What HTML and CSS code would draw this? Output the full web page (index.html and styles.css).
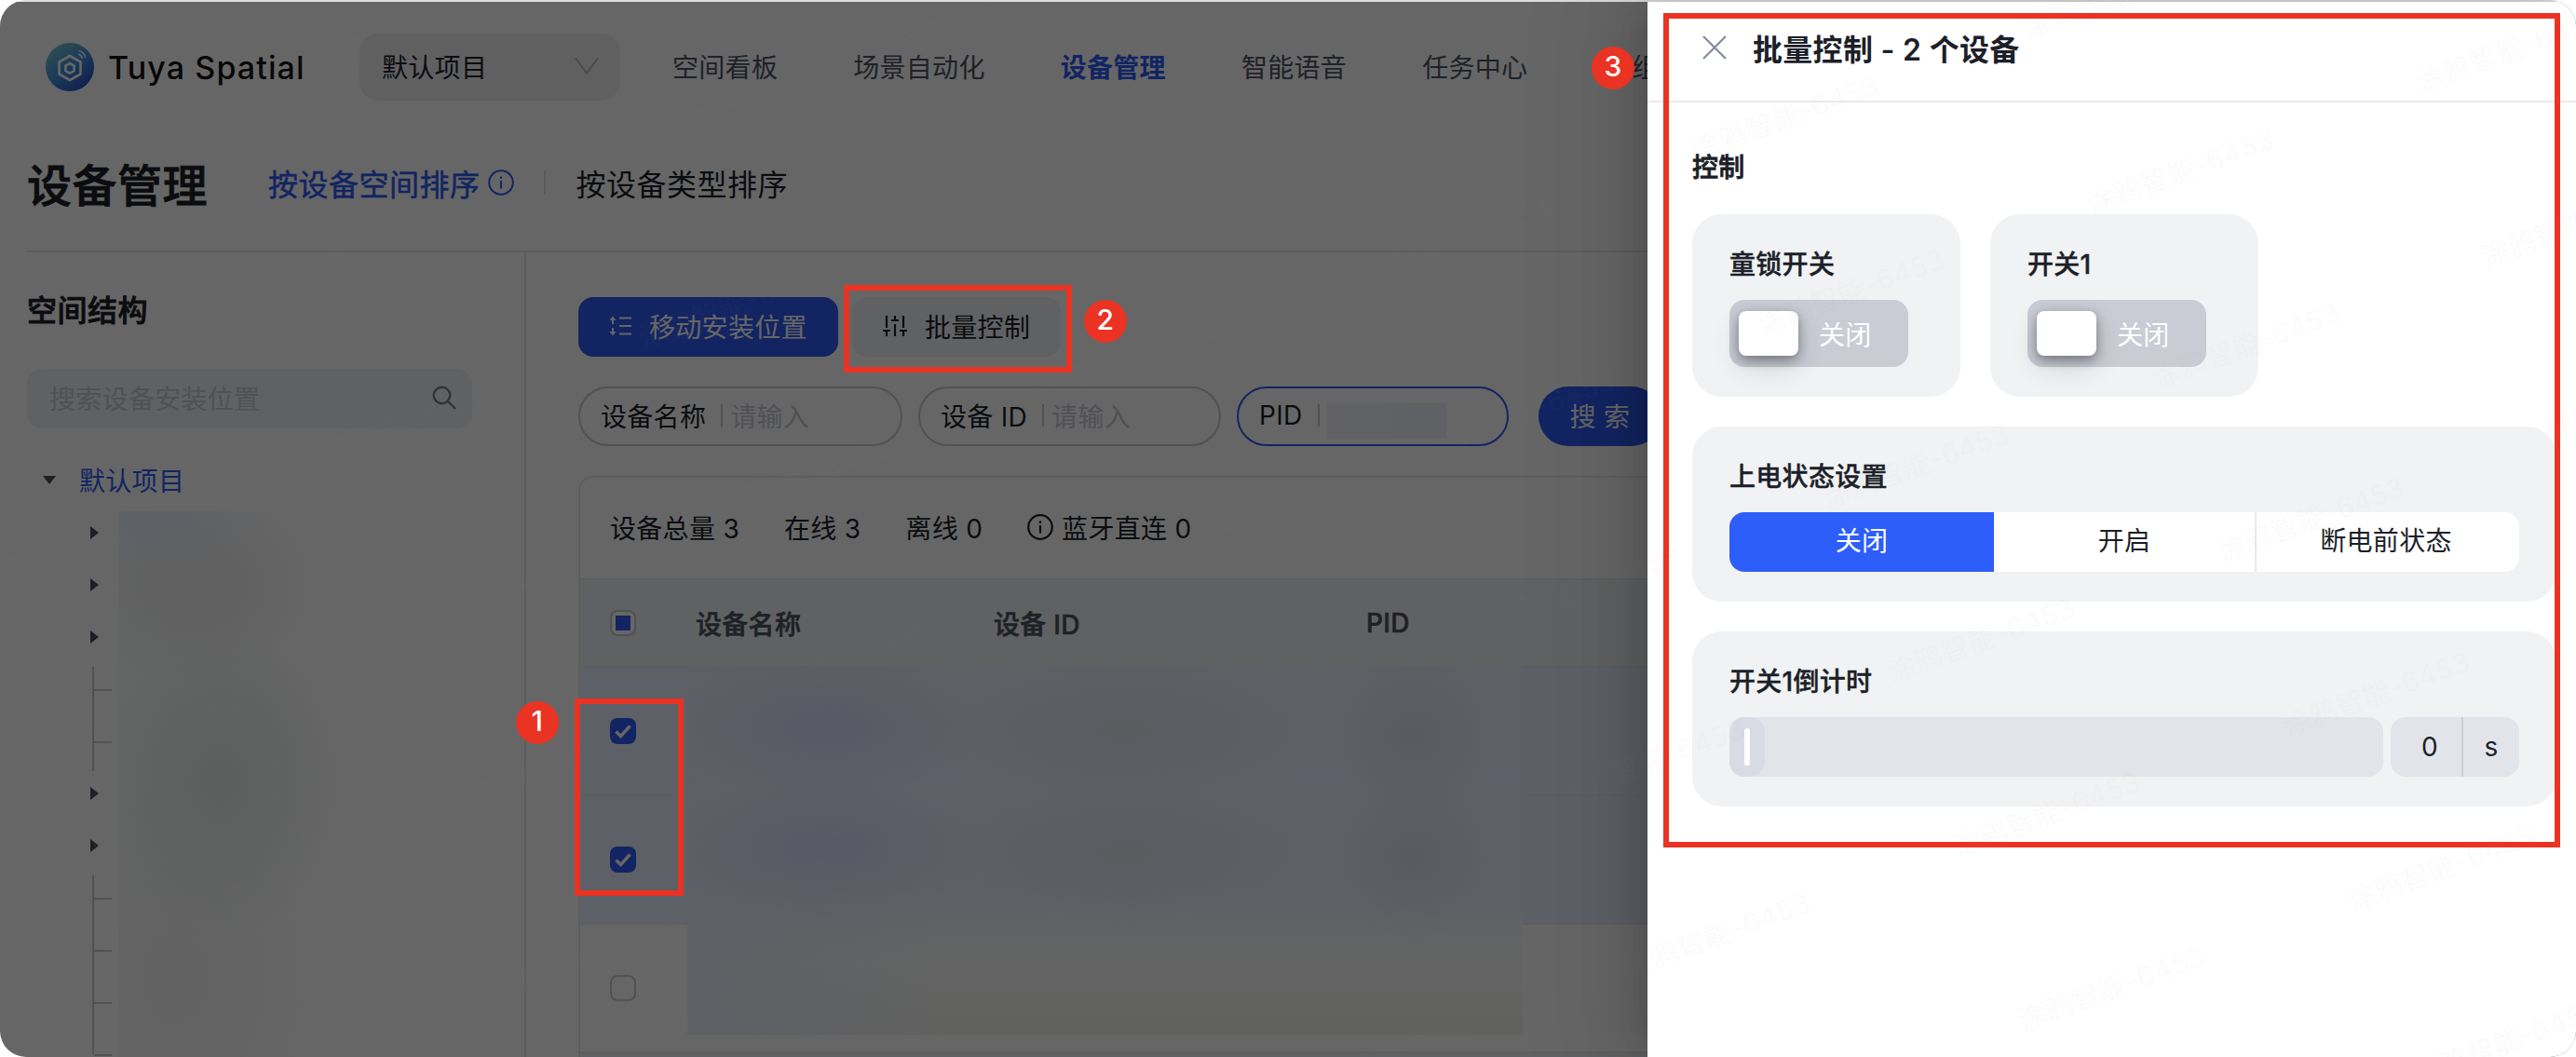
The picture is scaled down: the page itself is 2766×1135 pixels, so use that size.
FILE: index.html
```html
<!DOCTYPE html>
<html lang="zh-CN">
<head>
    <meta charset="UTF-8">
    <meta name="viewport" content="width=device-width, initial-scale=1.0">
    <title>设备管理</title>
    <link rel="stylesheet" href="styles.css">
</head>
<body>
    <div class="app">
        <header class="header">
            <div class="logo">
                <svg width="52" height="52" viewBox="0 0 52 52" fill="none">
                    <defs>
                        <linearGradient id="logoBg" x1="8" y1="6" x2="40" y2="48" gradientUnits="userSpaceOnUse">
                            <stop offset="0" stop-color="#6fc0cf"/>
                            <stop offset="0.5" stop-color="#4390dd"/>
                            <stop offset="1" stop-color="#2c55c8"/>
                        </linearGradient>
                    </defs>
                    <circle cx="26" cy="26" r="26" fill="url(#logoBg)"/>
                    <path d="M26 14l11.5 6.5v13L26 40l-11.5-6.5v-13z" stroke="#fff" stroke-width="2.6" stroke-linejoin="round"/>
                    <path d="M26 22l4.6 2.6v5.4L26 32.600l-4.600-2.600v-5.400z" stroke="#fff" stroke-width="2.600" stroke-linejoin="round"/>
                    <path d="M35 12.500a4.500 4.500 0 0 1 4 4.500M35.500 8.500a8 8 0 0 1 7 7.500" stroke="#fff" stroke-width="1.600"/>
                </svg>
                <span>Tuya Spatial</span>
            </div>
            <div class="project-select">
                <span>默认项目</span>
                <svg width="26" height="20" viewBox="0 0 26 20" fill="none" stroke="#b4b8c4" stroke-width="2"><path d="M1 1.500l12 16 12-16"/></svg>
            </div>
            <nav class="nav">
                <a>空间看板</a>
                <a>场景自动化</a>
                <a class="active">设备管理</a>
                <a>智能语音</a>
                <a>任务中心</a>
                <a class="nav-last">组</a>
            </nav>
        </header>

        <div class="title-row">
            <h1>设备管理</h1>
            <a class="sort active">按设备空间排序
                <svg width="28" height="28" viewBox="0 0 28 28" fill="none" stroke="currentColor" stroke-width="2"><circle cx="14" cy="14" r="12.800"/><path d="M14 12v8.500M14 7.500v2.400"/></svg>
            </a>
            <i class="sort-divider"></i>
            <a class="sort">按设备类型排序</a>
        </div>

        <div class="body">
            <aside class="sidebar">
                <h2>空间结构</h2>
                <div class="tree-search">
                    <span>搜索设备安装位置</span>
                    <svg width="26" height="26" viewBox="0 0 26 26" fill="none" stroke="#7b808e" stroke-width="2.400"><circle cx="10.500" cy="10.500" r="8.800"/><path d="M16.800 16.800L25 25"/></svg>
                </div>
                <div class="tree-root"><i class="caret-down"></i><span>默认项目</span></div>
                <div class="tree-row"><i class="caret"></i></div>
                <div class="tree-row"><i class="caret"></i></div>
                <div class="tree-row"><i class="caret"></i></div>
                <div class="branches">
                    <div class="branch"></div>
                    <div class="branch"></div>
                </div>
                <div class="tree-row"><i class="caret"></i></div>
                <div class="tree-row"><i class="caret"></i></div>
                <div class="branches">
                    <div class="branch"></div>
                    <div class="branch"></div>
                    <div class="branch"></div>
                    <div class="branch last"></div>
                </div>
            </aside>

            <main class="content">
                <div class="toolbar">
                    <button class="btn btn-primary">
                        <svg width="24" height="22" viewBox="0 0 24 22" fill="none" stroke="currentColor" stroke-width="2"><path d="M4 4v5M4 13v5M11 2.500h13M11 11h13M11 19.500h13"/><path d="M4 .5L7.500 5h-7zM4 21.500L7.500 17h-7z" fill="currentColor" stroke="none"/></svg>
                        移动安装位置
                    </button>
                    <button class="btn btn-default">
                        <svg width="26" height="24" viewBox="0 0 26 24" fill="none" stroke="currentColor" stroke-width="2.200"><path d="M4 1v13M4 18v5M0 17h8M13 1v4M13 10v13M9 6h8M22 1v13M22 18v5M18 17h8"/></svg>
                        批量控制
                    </button>
                </div>

                <div class="filters">
                    <div class="filter filter-name"><span>设备名称</span><i></i><em>请输入</em></div>
                    <div class="filter filter-id"><span>设备 ID</span><i></i><em>请输入</em></div>
                    <div class="filter filter-pid"><span>PID</span><i></i><b class="pid-value"></b></div>
                    <button class="btn-search">搜 索</button>
                </div>

                <div class="table">
                    <div class="stats">
                        <span>设备总量 3</span>
                        <span>在线 3</span>
                        <span>离线 0</span>
                        <span class="stat-ble">
                            <svg width="28" height="28" viewBox="0 0 28 28" fill="none" stroke="currentColor" stroke-width="2.200"><circle cx="14" cy="14" r="12.800"/><path d="M14 12v8.500M14 7.500v2.400"/></svg>
                            蓝牙直连 0
                        </span>
                    </div>
                    <div class="row head">
                        <i class="checkbox partial"></i>
                        <span>设备名称</span>
                        <span>设备 ID</span>
                        <span>PID</span>
                    </div>
                    <div class="row selected">
                        <i class="checkbox checked"><svg width="28" height="28" viewBox="0 0 28 28" fill="none" stroke="#fff" stroke-width="3.400"><path d="M6.500 14.500l5 5 10-11"/></svg></i>
                    </div>
                    <div class="row selected">
                        <i class="checkbox checked"><svg width="28" height="28" viewBox="0 0 28 28" fill="none" stroke="#fff" stroke-width="3.400"><path d="M6.500 14.500l5 5 10-11"/></svg></i>
                    </div>
                    <div class="row">
                        <i class="checkbox"></i>
                    </div>
                    <div class="row foot"></div>
                </div>
            </main>
        </div>

        <div class="mask"></div>

        <section class="drawer">
            <div class="drawer-header">
                <svg width="26" height="26" viewBox="0 0 26 26" fill="none" stroke="#858b9c" stroke-width="2.200"><path d="M1 1l24 24M25 1L1 25"/></svg>
                <span>批量控制 - 2 个设备</span>
            </div>
            <div class="drawer-body">
                <h3>控制</h3>
                <div class="switches">
                    <div class="card">
                        <label>童锁开关</label>
                        <div class="switch"><i></i>关闭</div>
                    </div>
                    <div class="card">
                        <label>开关1</label>
                        <div class="switch"><i></i>关闭</div>
                    </div>
                </div>
                <div class="card">
                    <label>上电状态设置</label>
                    <div class="segment">
                        <span class="on">关闭</span>
                        <span>开启</span>
                        <span>断电前状态</span>
                    </div>
                </div>
                <div class="card">
                    <label>开关1倒计时</label>
                    <div class="countdown">
                        <div class="slider"><div class="handle"><i></i></div></div>
                        <div class="number"><span>0</span><span>s</span></div>
                    </div>
                </div>
            </div>
        </section>

        <div class="watermark" id="watermark"></div>

        <!-- blurred private data -->
        <div class="blur blur-tree"></div>
        <div class="blur blur-table"></div>

        <!-- step marks -->
        <div class="frame frame-1"></div>
        <div class="frame frame-2"></div>
        <div class="frame frame-3"></div>
        <div class="step step-1">1</div>
        <div class="step step-2">2</div>
        <div class="step step-3">3</div>
    </div>

    <script>
        // Tile the watermark over the whole page
        const layer = document.getElementById('watermark');
        for (let i = -3; i < 9; i++) {
            for (let j = -4; j < 9; j++) {
                const x = 193 + i * 423.7 + j * 70;
                const y = 100 + i * 57.3 + j * 187;
                if (x < -200 || x > 2760 || y < -20 || y > 1200) continue;
                const mark = document.createElement('span');
                mark.textContent = '涂鸦智能-6453';
                mark.style.left = x + 'px';
                mark.style.top = y + 'px';
                layer.appendChild(mark);
            }
        }
    </script>
</body>
</html>
```

FILE: styles.css
```css
* {
    box-sizing: border-box;
}

body {
    margin: 0;
    background: #fff;
    font-family: Inter, "Noto Sans CJK SC", sans-serif;
    font-size: 28px;
    letter-spacing: 0.3px;
    color: #1c1f28;
}

h1, h2, h3 {
    margin: 0;
    font-weight: 500;
}

h1, h2 {
    -webkit-text-stroke: 0.8px currentColor;
}

i, em {
    font-style: normal;
}

svg {
    display: block;
    flex: none;
}

button {
    border: none;
    font: inherit;
    letter-spacing: inherit;
    padding: 0;
}

.app {
    position: relative;
    width: 2766px;
    height: 1135px;
    overflow: hidden;
    border-radius: 28px;
    background: #fff;
    white-space: nowrap;
}

/* header */
.header {
    display: flex;
    align-items: center;
    height: 144px;
    padding-left: 49px;
}

.logo {
    display: flex;
    align-items: center;
    gap: 15px;
    width: 337px;
    font-family: Inter, sans-serif;
    font-size: 34px;
    font-weight: 500;
    letter-spacing: 1.1px;
    color: #111;
}

.project-select {
    display: flex;
    align-items: center;
    justify-content: space-between;
    width: 280px;
    height: 72px;
    padding: 0 23px 2px 24px;
    border-radius: 20px;
    background: #f0f1f3;
}

.nav {
    display: flex;
    gap: 81px;
    margin-left: 56px;
    padding-bottom: 2px;
    color: #4f5463;
}

.nav .active {
    color: #2d5bf5;
    font-weight: 700;
}

.nav .nav-last {
    padding-left: 31px;
}

/* title */
.title-row {
    display: flex;
    align-items: center;
    height: 127px;
    margin-left: 29px;
    padding-bottom: 21px;
    border-bottom: 2px solid #ebecee;
    font-size: 32px;
    letter-spacing: 0.5px;
}

.title-row h1 {
    width: 259px;
    font-size: 48px;
}

.sort {
    display: flex;
    align-items: center;
    gap: 8px;
}

.sort.active {
    color: #2d5bf5;
    -webkit-text-stroke: 0.5px currentColor;
}

.sort-divider {
    width: 2px;
    height: 26px;
    margin: 0 33px 0 32px;
    background: #dfe0e6;
}

.body {
    display: flex;
    height: 864px;
}

/* sidebar */
.sidebar {
    width: 565px;
    border-right: 2px solid #ebecee;
    padding-top: 39px;
}

.sidebar h2 {
    margin-left: 29px;
    font-size: 32px;
    line-height: 48px;
    letter-spacing: 0.5px;
}

.tree-search {
    display: flex;
    align-items: center;
    justify-content: space-between;
    width: 478px;
    height: 64px;
    margin: 38px 0 0 29px;
    padding: 0 17px 2px 24px;
    border-radius: 16px;
    background: #f1f2f4;
    color: #c8cad3;
}

.tree-root {
    display: flex;
    align-items: center;
    height: 56px;
    margin-top: 27px;
    margin-bottom: 1px;
    padding-left: 46px;
    color: #2d5bf5;
}

.caret-down {
    width: 14px;
    margin-right: 25px;
    border: 7px solid transparent;
    border-top: 9px solid #4c4f5c;
    border-bottom: 0;
}

.tree-row {
    display: flex;
    align-items: center;
    height: 56px;
    padding-left: 97px;
}

.caret {
    border: 7px solid transparent;
    border-left: 9px solid #4c4f5c;
    border-right: 0;
}

.branches {
    margin: 4px 0 -4px 99px;
}

.branch {
    width: 21px;
    height: 56px;
    border-left: 2px solid #c8cad3;
}

.branch::after {
    content: "";
    display: block;
    height: 24px;
    border-bottom: 2px solid #c8cad3;
}

.branch.last {
    height: 24px;
}

/* content */
.content {
    flex: 1;
    padding: 48px 0 0 56px;
}

.toolbar {
    display: flex;
    gap: 15px;
}

.btn {
    display: flex;
    align-items: center;
    gap: 19px;
    height: 64px;
    padding-bottom: 2px;
    border-radius: 16px;
}

.btn-primary {
    width: 279px;
    padding-left: 33px;
    background: #2d5bf5;
    color: #fff;
}

.btn-default {
    width: 224px;
    padding-left: 33px;
    background: #f1f2f4;
    color: #1c1f28;
}

.filters {
    display: flex;
    margin-top: 32px;
}

.filter {
    display: flex;
    align-items: center;
    height: 64px;
    margin-right: 17px;
    padding: 0 0 2px 22px;
    border: 2px solid #c8cad3;
    border-radius: 32px;
}

.filter i {
    width: 2px;
    height: 24px;
    margin: 0 8px 0 16px;
    background: #c8cad3;
}

.filter em {
    color: #c8cad3;
}

.filter-name {
    width: 348px;
}

.filter-id {
    width: 325px;
}

.filter-pid {
    width: 292px;
    margin-right: 32px;
    border-color: #2d5bf5;
}

.pid-value {
    width: 128px;
    height: 38px;
    margin-top: 12px;
    background: linear-gradient(90deg, #f4f6fb, #f0f2fa);
}

.btn-search {
    width: 132px;
    height: 64px;
    padding-bottom: 2px;
    border-radius: 32px;
    background: #2d5bf5;
    color: #fff;
}

.table {
    margin-top: 32px;
    border: 2px solid #ebecee;
    border-right: 0;
    border-radius: 16px 0 0 0;
    height: 640px;
}

.stats {
    display: flex;
    align-items: center;
    gap: 48px;
    height: 110px;
    padding: 0 0 2px 32px;
    border-bottom: 2px solid #e9eaec;
}

.stat-ble {
    display: flex;
    align-items: center;
    gap: 9px;
}

.row {
    display: grid;
    grid-template-columns: 92px 320px 400px 200px;
    align-items: center;
    height: 138px;
    padding-left: 32px;
    border-bottom: 2px solid #e9eaec;
}

.row.head {
    height: 94px;
    padding-bottom: 1px;
    background: #f1f2f4;
    color: #4f5463;
    font-weight: 500;
    -webkit-text-stroke: 0.6px currentColor;
}

.row.selected {
    background: #e9f0ff;
}

.row.foot {
    background: #f1f2f4;
}

.checkbox {
    display: grid;
    place-items: center;
    width: 28px;
    height: 28px;
    border: 2px solid #c8cad3;
    border-radius: 8px;
    background: #fff;
}

.checkbox.partial::before {
    content: "";
    width: 16px;
    height: 16px;
    background: #2d5bf5;
}

.checkbox.checked {
    border: none;
    background: #2d5bf5;
}

.mask {
    position: absolute;
    inset: 0;
    border-top: 2px solid #dcdcdc;
    background: rgba(0, 0, 0, 0.6);
    background-clip: padding-box;
}

/* drawer */
.drawer {
    position: absolute;
    top: 2px;
    right: 0;
    width: 997px;
    height: 1133px;
    background: #fff;
    box-shadow: -12px 0 32px -16px rgba(0, 0, 0, 0.16), -18px 0 56px rgba(0, 0, 0, 0.1), -24px 0 96px 32px rgba(0, 0, 0, 0.06);
}

.drawer-header {
    display: flex;
    align-items: center;
    gap: 28px;
    height: 108px;
    padding: 0 0 8px 59px;
    border-bottom: 2px solid #ebebed;
    font-size: 32px;
    font-weight: 600;
}

.drawer-body {
    display: flex;
    flex-direction: column;
    gap: 28px;
    width: 976px;
    padding: 48px 0 0 48px;
}

.drawer-body h3 {
    font-size: 28px;
    line-height: 44px;
    -webkit-text-stroke: 0.8px currentColor;
}

.switches {
    display: flex;
    gap: 32px;
    margin-bottom: 4px;
}

.switches .card {
    width: 288px;
}

.card {
    padding: 32px 40px;
    border-radius: 32px;
    background: #f1f2f4;
}

.card + .card {
    margin-top: 4px;
}

.card label {
    display: block;
    margin-bottom: 16px;
    line-height: 44px;
    font-weight: 500;
    -webkit-text-stroke: 0.4px currentColor;
}

.switches .card + .card {
    margin-top: 0;
}

.switch {
    display: flex;
    align-items: center;
    width: 192px;
    height: 72px;
    padding: 0 0 0 10px;
    border-radius: 16px;
    background: #c9ccd5;
    color: #fff;
}

.switch i {
    width: 64px;
    height: 48px;
    margin-right: 22px;
    border-radius: 8px;
    background: #fff;
    box-shadow: 0 4px 12px rgba(0, 0, 0, 0.35), 0 12px 28px rgba(0, 0, 0, 0.15);
}

.segment {
    display: flex;
    height: 64px;
    border-radius: 16px;
    background: #fff;
    overflow: hidden;
}

.segment span {
    width: 280px;
    text-align: center;
    line-height: 63px;
}

.segment span + span + span {
    width: 284px;
    padding-right: 4px;
    border-left: 2px solid #e8e9ed;
}

.segment .on {
    width: 284px;
    background: #2d5efa;
    color: #fff;
}

.countdown {
    display: flex;
    gap: 8px;
    height: 64px;
}

.slider {
    width: 702px;
    border-radius: 16px;
    background: #e3e4ea;
}

.handle {
    display: flex;
    align-items: center;
    justify-content: center;
    width: 38px;
    height: 64px;
    border-radius: 16px;
    background: #d9dbe4;
}

.handle i {
    width: 6px;
    height: 40px;
    border-radius: 3px;
    background: #fff;
}

.number {
    display: grid;
    grid-template-columns: 78px 60px;
    flex: 1;
    border-radius: 16px;
    background: #e3e4ea;
    line-height: 64px;
    text-align: center;
}

.number span:first-child {
    padding-left: 8px;
    border-right: 2px solid #cdcfd6;
}

/* watermark */
.watermark {
    position: absolute;
    inset: 2px 0 0 0;
    overflow: hidden;
    pointer-events: none;
}

.watermark span {
    position: absolute;
    font-size: 30px;
    line-height: 36px;
    color: rgba(150, 150, 150, 0.05);
    transform-origin: 0 50%;
    transform: rotate(-20deg);
}

.blur {
    position: absolute;
}

.blur-tree {
    left: 127px;
    top: 549px;
    width: 300px;
    height: 586px;
    background:
        radial-gradient(ellipse 140px 60px at 20px 0, rgba(94, 96, 106, 0.8), transparent),
        radial-gradient(ellipse 130px 110px at 80px 80px, #5f5f5f, transparent),
        radial-gradient(ellipse 130px 170px at 110px 290px, #5c5d5d, transparent),
        radial-gradient(ellipse 150px 220px at 60px 500px, #616261, transparent),
        linear-gradient(90deg, #646565, #666 85%);
}

.blur-table {
    left: 738px;
    top: 715px;
    width: 897px;
    height: 396px;
    background:
        radial-gradient(ellipse 170px 80px at 150px 65px, #575a65, transparent),
        radial-gradient(ellipse 170px 80px at 150px 195px, #575a65, transparent),
        radial-gradient(ellipse 220px 80px at 470px 70px, #5b5c60, transparent),
        radial-gradient(ellipse 220px 80px at 470px 200px, #5a5c60, transparent),
        radial-gradient(ellipse 90px 90px at 780px 75px, #595b60, transparent),
        radial-gradient(ellipse 90px 90px at 780px 205px, #595b60, transparent),
        linear-gradient(90deg, rgba(93, 95, 102, 0.8), transparent 30%),
        linear-gradient(#5e6064, #5d6068 30%, #5e6066 60%, #636463 80%, #616160);
}

/* step marks */
.frame {
    position: absolute;
    border: 6px solid #ea3323;
}

.frame-1 {
    left: 617px;
    top: 750px;
    width: 117px;
    height: 212px;
}

.frame-2 {
    left: 906px;
    top: 306px;
    width: 245px;
    height: 94px;
}

.frame-3 {
    left: 1786px;
    top: 14px;
    width: 963px;
    height: 896px;
}

.step {
    position: absolute;
    width: 46px;
    height: 46px;
    border-radius: 50%;
    background: #ea3323;
    color: #fff;
    font-size: 30px;
    font-weight: 500;
    line-height: 43px;
    text-align: center;
}

.step-1 {
    left: 554px;
    top: 753px;
}

.step-2 {
    left: 1164px;
    top: 322px;
}

.step-3 {
    left: 1709px;
    top: 50px;
}
```
